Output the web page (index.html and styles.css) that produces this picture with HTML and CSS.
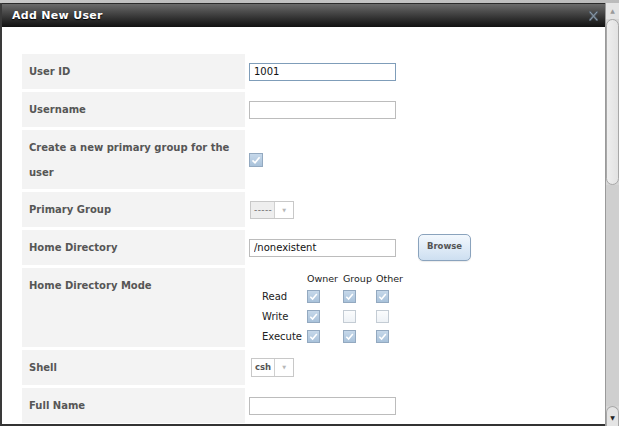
FILE: index.html
```html
<!DOCTYPE html>
<html>
<head>
<meta charset="utf-8">
<link rel="stylesheet" href="styles.css">
</head>
<body>
<div class="top"></div>
<div class="frame">
  <div class="dialog">
    <div class="titlebar">
      <span class="title">Add New User</span>
      <svg class="close" width="9" height="10" viewBox="0 0 9 10"><path d="M1.2 1.2 L7.8 8.8 M7.8 1.2 L1.2 8.8" stroke="#56626e" stroke-width="2.4" stroke-linecap="round"/><path d="M1.2 1.2 L7.8 8.8 M7.8 1.2 L1.2 8.8" stroke="#8e9dab" stroke-width="1" stroke-linecap="round"/></svg>
    </div>
    <div class="content">
      <div class="form">
        <div class="row">
          <div class="label">User ID</div>
          <div class="value"><input class="text active" type="text" value="1001"></div>
        </div>
        <div class="row">
          <div class="label">Username</div>
          <div class="value"><input class="text" type="text" value=""></div>
        </div>
        <div class="row tall">
          <div class="label">Create a new primary group for the user</div>
          <div class="value"><span class="cb on big"><svg viewBox="0 0 12 12"><path d="M2.5 6.3 L5 8.8 L9.6 3.2" fill="none" stroke="#fff" stroke-width="1.7"/></svg></span></div>
        </div>
        <div class="row">
          <div class="label">Primary Group</div>
          <div class="value"><span class="sel disabled"><span class="sel-text">-----</span><span class="sel-arrow">&#9660;</span></span></div>
        </div>
        <div class="row">
          <div class="label">Home Directory</div>
          <div class="value"><input class="text" type="text" value="/nonexistent"><span class="btn">Browse</span></div>
        </div>
        <div class="row mode">
          <div class="label">Home Directory Mode</div>
          <div class="value top-al">
            <div class="perms">
              <span></span><span class="ph">Owner</span><span class="ph">Group</span><span class="ph">Other</span>
              <span class="pl">Read</span>
              <span class="pc"><span class="cb on"><svg viewBox="0 0 12 12"><path d="M2.5 6.3 L5 8.8 L9.6 3.2" fill="none" stroke="#fff" stroke-width="1.7"/></svg></span></span>
              <span class="pc"><span class="cb on"><svg viewBox="0 0 12 12"><path d="M2.5 6.3 L5 8.8 L9.6 3.2" fill="none" stroke="#fff" stroke-width="1.7"/></svg></span></span>
              <span class="pc"><span class="cb on"><svg viewBox="0 0 12 12"><path d="M2.5 6.3 L5 8.8 L9.6 3.2" fill="none" stroke="#fff" stroke-width="1.7"/></svg></span></span>
              <span class="pl">Write</span>
              <span class="pc"><span class="cb on"><svg viewBox="0 0 12 12"><path d="M2.5 6.3 L5 8.8 L9.6 3.2" fill="none" stroke="#fff" stroke-width="1.7"/></svg></span></span>
              <span class="pc"><span class="cb off"></span></span>
              <span class="pc"><span class="cb off"></span></span>
              <span class="pl">Execute</span>
              <span class="pc"><span class="cb on"><svg viewBox="0 0 12 12"><path d="M2.5 6.3 L5 8.8 L9.6 3.2" fill="none" stroke="#fff" stroke-width="1.7"/></svg></span></span>
              <span class="pc"><span class="cb on"><svg viewBox="0 0 12 12"><path d="M2.5 6.3 L5 8.8 L9.6 3.2" fill="none" stroke="#fff" stroke-width="1.7"/></svg></span></span>
              <span class="pc"><span class="cb on"><svg viewBox="0 0 12 12"><path d="M2.5 6.3 L5 8.8 L9.6 3.2" fill="none" stroke="#fff" stroke-width="1.7"/></svg></span></span>
            </div>
          </div>
        </div>
        <div class="row">
          <div class="label">Shell</div>
          <div class="value"><span class="sel shell"><span class="sel-text">csh</span><span class="sel-arrow">&#9660;</span></span></div>
        </div>
        <div class="row">
          <div class="label">Full Name</div>
          <div class="value"><input class="text" type="text" value=""></div>
        </div>
      </div>
    </div>
  </div>
  <div class="scrollbar">
    <div class="sb-up">&#9650;</div>
    <div class="sb-thumb"></div>
    <div class="sb-track"></div>
    <div class="sb-down">&#9660;</div>
  </div>
</div>
</body>
</html>
```

FILE: styles.css
```css
* { box-sizing: border-box; }
html, body { margin: 0; padding: 0; }
body {
  width: 619px;
  height: 426px;
  overflow: hidden;
  font-family: "DejaVu Sans", Verdana, sans-serif;
  background: #fff;
}
.top {
  height: 3px;
  background: linear-gradient(to right, #c9c9c9, #bdbdbd 30%, #c4c4c4 60%, #bbb);
}
.frame {
  display: flex;
  height: 423px;
}
.dialog {
  width: 605px;
  height: 423px;
  border-left: 2px solid #3a3a3a;
  border-bottom: 2px solid #333;
  overflow: hidden;
  display: flex;
  flex-direction: column;
  background: #fff;
}
.titlebar {
  height: 24px;
  flex: none;
  display: flex;
  align-items: center;
  justify-content: space-between;
  padding: 0 7px 0 10px;
  background: linear-gradient(to bottom, #6b6b6b 0%, #4a4a4a 35%, #262626 75%, #121212 100%);
  border-top: 1px solid #2a2a2a;
}
.title {
  color: #fff;
  font-weight: bold;
  font-size: 11px;
  letter-spacing: 0.3px;
  text-shadow: 0 1px 1px #000;
}
.close { display: block; }
.content {
  padding: 27px 0 0 20px;
}
.form {
  display: flex;
  flex-direction: column;
  gap: 3px;
}
.row {
  display: flex;
  min-height: 35px;
}
.label {
  width: 223px;
  flex: none;
  background: #f3f3f3;
  padding: 5px 7px;
  font-size: 10px;
  line-height: 25px;
  font-weight: bold;
  color: #565656;
}
.row.tall .label { padding-bottom: 4px; }
.value {
  flex: 1;
  display: flex;
  align-items: center;
  padding-left: 4px;
}
.value.top-al {
  align-items: flex-start;
  padding-top: 2px;
  padding-bottom: 1px;
}
.text {
  width: 147px;
  height: 18px;
  border: 1px solid #bcbcbc;
  padding: 0 4px;
  font-family: "DejaVu Sans", Verdana, sans-serif;
  font-size: 10px;
  color: #111;
  background: #fff;
  outline: none;
  margin: 0;
}
.text.active { border-color: #7f9db9; }
.btn {
  margin-left: 22px;
  width: 53px;
  height: 27px;
  border: 1px solid #8aa3bd;
  border-radius: 5px;
  background: linear-gradient(to bottom, #f3f8fd, #dce9f6 60%, #cddff1);
  font-size: 8.5px;
  font-weight: bold;
  color: #555;
  display: flex;
  align-items: center;
  justify-content: center;
  padding-bottom: 3px;
  box-shadow: 0 1px 1px rgba(0,0,0,0.08);
}
.cb {
  width: 13px;
  height: 13px;
  display: inline-block;
  border: 1px solid #93a9c0;
}
.cb.big { width: 14px; height: 14px; }
.cb.on {
  background: linear-gradient(to bottom, #c6d8ea, #a9c2da);
}
.cb.on svg { display: block; width: 100%; height: 100%; }
.cb.off {
  border-color: #c4ccd4;
  background: linear-gradient(to bottom, #fbfcfd, #eef2f6);
}
.sel {
  display: inline-flex;
  height: 18px;
  border: 1px solid #c8c8c8;
  font-size: 10px;
  line-height: 16px;
  white-space: nowrap;
}
.sel-text {
  padding: 0 3px;
  border-right: 1px solid #d0d0d0;
  white-space: nowrap;
}
.sel-arrow {
  width: 18px;
  text-align: center;
  font-size: 5px;
  color: #b8b8b8;
  line-height: 16px;
}
.sel.disabled { margin-left: 1px; }
.sel.disabled .sel-text {
  background: #eeeeee;
  color: #666;
  font-size: 9px;
  letter-spacing: 0.4px;
  padding: 0 2px 0 3px;
}
.sel.shell {
  margin-left: 2px;
  height: 19px;
}
.sel.shell .sel-text {
  padding: 0 3px;
  font-size: 8.5px;
  font-weight: bold;
  color: #555;
  line-height: 17px;
}
.sel.shell .sel-arrow { line-height: 17px; width: 18px; }
.perms {
  margin-left: 13px;
  display: grid;
  grid-template-columns: 45px 36px 33px 30px;
  grid-template-rows: 16px 20px 20px 20px;
  font-size: 9.5px;
  color: #222;
}
.perms > span {
  display: flex;
  align-items: center;
}
.perms .pl { font-size: 10px; }
.scrollbar {
  width: 14px;
  height: 423px;
  background: #d6d6d6;
  border-left: 1px solid #9a9a9a;
  display: flex;
  flex-direction: column;
}
.sb-up, .sb-down {
  height: 16px;
  font-size: 6px;
  color: #555;
  text-align: center;
  line-height: 16px;
  background: #e4e4e4;
}
.sb-up { color: #999; }
.sb-thumb {
  height: 166px;
  background: linear-gradient(to right, #eeeeee, #e2e2e2);
  border: 1px solid #a8a8a8;
  border-radius: 7px;
}
.sb-track {
  flex: 1;
  background: #cfcfcf;
}
.sb-down {
  height: 20px;
  border-radius: 7px 7px 0 0;
  border: 1px solid #a8a8a8;
  border-bottom: none;
  color: #222;
  line-height: 22px;
}
```
